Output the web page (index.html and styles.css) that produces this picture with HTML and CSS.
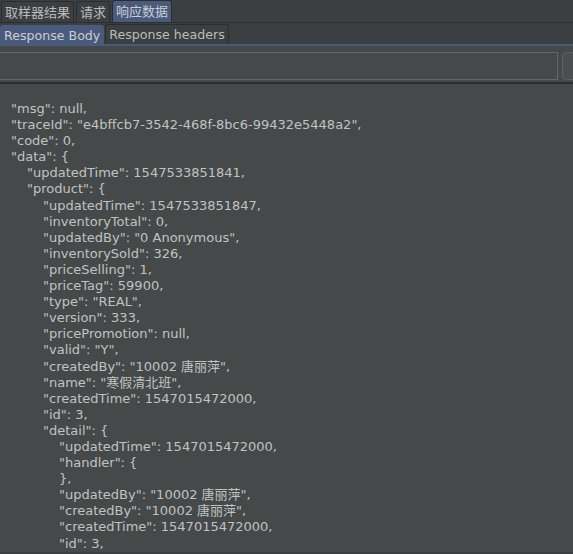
FILE: index.html
```
<!DOCTYPE html>
<html>
<head>
<meta charset="utf-8">
<link rel="stylesheet" href="styles.css">
</head>
<body>
<div class="app">
  <div class="tabs top">
    <div class="tab">取样器结果</div>
    <div class="tab">请求</div>
    <div class="tab sel">响应数据</div>
  </div>
  <div class="tabs sub">
    <div class="tab sel">Response Body</div>
    <div class="tab">Response headers</div>
  </div>
  <div class="search">
    <div class="field"></div>
    <div class="btn"></div>
  </div>
  <div class="body">
    <div class="json">
      <div class="ln">"msg": null,</div>
      <div class="ln">"traceId": "e4bffcb7-3542-468f-8bc6-99432e5448a2",</div>
      <div class="ln">"code": 0,</div>
      <div class="ln">"data": {</div>
      <div class="ln l1">"updatedTime": 1547533851841,</div>
      <div class="ln l1">"product": {</div>
      <div class="ln l2">"updatedTime": 1547533851847,</div>
      <div class="ln l2">"inventoryTotal": 0,</div>
      <div class="ln l2">"updatedBy": "0 Anonymous",</div>
      <div class="ln l2">"inventorySold": 326,</div>
      <div class="ln l2">"priceSelling": 1,</div>
      <div class="ln l2">"priceTag": 59900,</div>
      <div class="ln l2">"type": "REAL",</div>
      <div class="ln l2">"version": 333,</div>
      <div class="ln l2">"pricePromotion": null,</div>
      <div class="ln l2">"valid": "Y",</div>
      <div class="ln l2">"createdBy": "10002 唐丽萍",</div>
      <div class="ln l2">"name": "寒假清北班",</div>
      <div class="ln l2">"createdTime": 1547015472000,</div>
      <div class="ln l2">"id": 3,</div>
      <div class="ln l2">"detail": {</div>
      <div class="ln l3">"updatedTime": 1547015472000,</div>
      <div class="ln l3">"handler": {</div>
      <div class="ln l3">},</div>
      <div class="ln l3">"updatedBy": "10002 唐丽萍",</div>
      <div class="ln l3">"createdBy": "10002 唐丽萍",</div>
      <div class="ln l3">"createdTime": 1547015472000,</div>
      <div class="ln l3">"id": 3,</div>
    </div>
  </div>
</div>
</body>
</html>
```
FILE: styles.css
```
html, body {
  margin: 0;
  padding: 0;
  background: #45494a;
}
.app {
  width: 573px;
  height: 554px;
  overflow: hidden;
  display: flex;
  flex-direction: column;
  background: #3c3f41;
  font-family: "DejaVu Sans", "Noto Sans CJK SC", sans-serif;
  color: #bbbbbb;
}
.tabs {
  flex: none;
  display: flex;
  align-items: flex-end;
  gap: 2px;
  box-sizing: border-box;
}
.tabs.top {
  height: 23px;
  border-bottom: 1px solid #2b2d2e;
  padding-left: 1px;
}
.tabs.sub {
  height: 23px;
  border-bottom: 2px solid #4a5a7d;
  padding-top: 3px;
  gap: 1px;
}
.tab {
  box-sizing: border-box;
  height: 21px;
  padding: 0 3px;
  border: 1px solid #2b2d2e;
  border-bottom: none;
  border-radius: 3px 3px 0 0;
  background: #3c3f41;
  font-size: 13px;
  line-height: 20px;
  white-space: nowrap;
  font-family: "Noto Sans CJK SC", sans-serif;
}
.tabs.top .tab { height: 21px; }
.tabs.top .tab.sel { height: 22px; }
.tab.sel {
  background: #4a5a7b;
  color: #c8cdd6;
}
.tabs.sub .tab {
  font-family: "DejaVu Sans", sans-serif;
  font-size: 12.6px;
  height: 20px;
  line-height: 19px;
}
.tabs.sub .tab.sel { height: 19px; border-color: #4a5a7b; }
.search {
  flex: none;
  display: flex;
  gap: 4px;
  height: 38px;
  padding: 6px 0 2px 0;
  box-sizing: border-box;
  border-bottom: 2px solid #2b2d2e;
  background: #45494a;
}
.field {
  flex: none;
  width: 560px;
  height: 28px;
  margin-left: -2px;
  box-sizing: border-box;
  border: 1px solid #646768;
  background: #45494a;
}
.btn {
  flex: none;
  width: 20px;
  height: 28px;
  box-sizing: border-box;
  border: 1px solid #5d6061;
  border-radius: 4px;
  background: #4a4e50;
}
.body {
  flex: 1;
  background: #45494a;
  padding: 17px 0 0 11px;
  border-bottom: 4px solid #3c3f41;
}
.json {
  font-family: "DejaVu Sans", "Noto Sans CJK SC", sans-serif;
  font-size: 13px;
  line-height: 16.1px;
  color: #c2c2c2;
  white-space: nowrap;
}
.ln.l1 { padding-left: 16px; }
.ln.l2 { padding-left: 32px; }
.ln.l3 { padding-left: 48px; }
```
